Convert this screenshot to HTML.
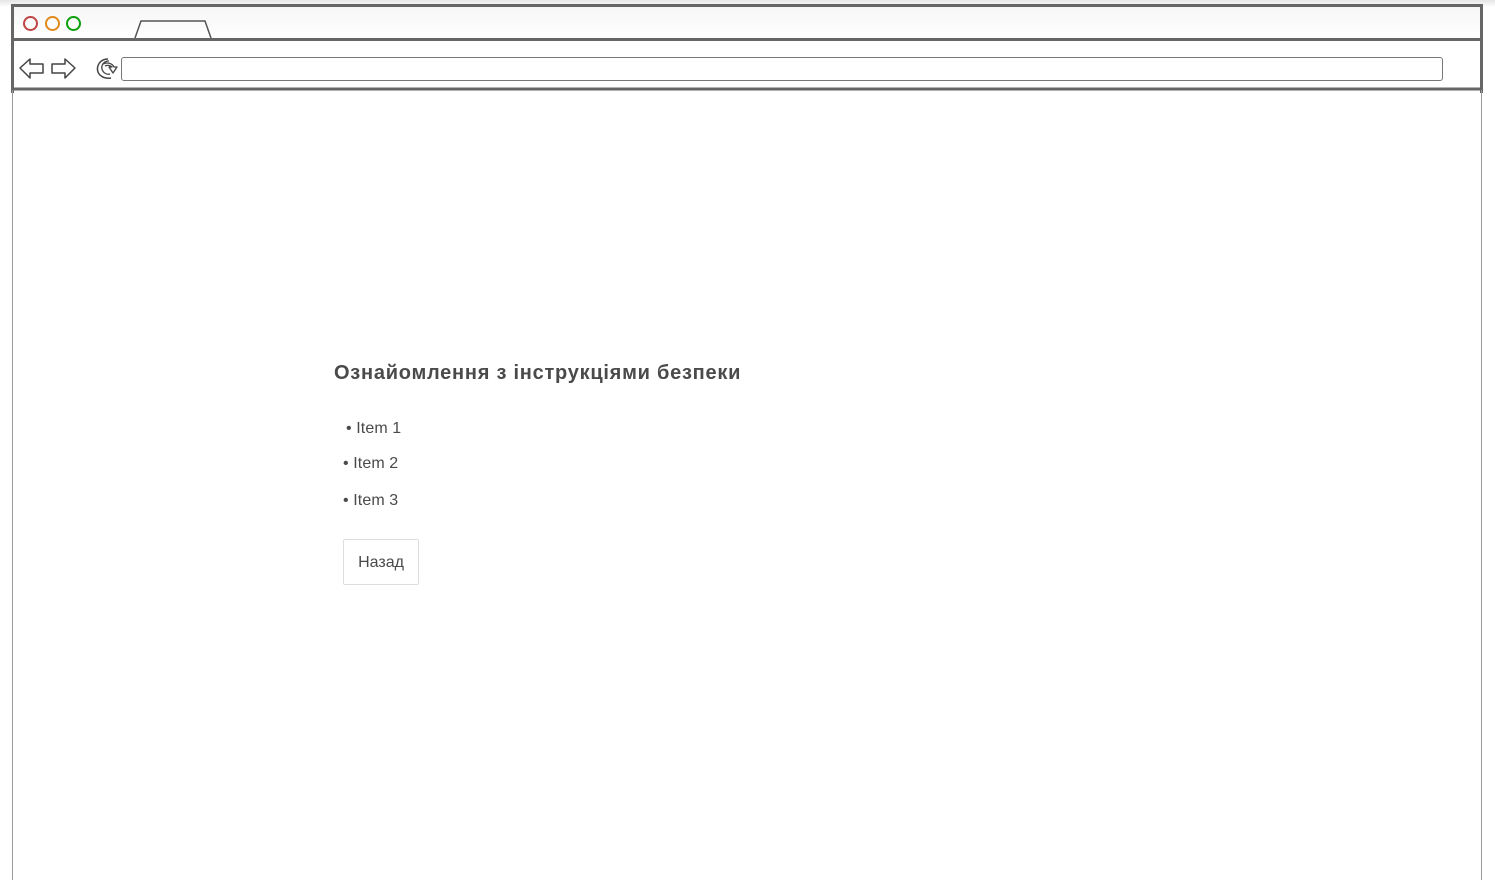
<!DOCTYPE html>
<html><head><meta charset="utf-8"><style>
body{margin:0;width:1495px;height:880px;overflow:hidden;background:#fff;font-family:"Liberation Sans",Arial,sans-serif;position:relative}
.topgrad{position:absolute;left:0;top:0;width:1495px;height:6px;background:linear-gradient(#e6e6e6,#fafafa)}
.frame{position:absolute;left:11px;top:4px;width:1466px;height:86px;border:3px solid #666;border-bottom:none;background:linear-gradient(#f6f6f6,#fff 30px)}
.sep{position:absolute;left:11px;top:38px;width:1472px;height:3px;background:#666}
.toolbar{position:absolute;left:14px;top:41px;width:1466px;height:46px;background:#fff}
.side{position:absolute;top:90px;width:1px;height:790px;background:#999}
.c{position:absolute;top:16px;width:11px;height:11px;border-radius:50%;border:2px solid}
.url{position:absolute;left:121px;top:57px;width:1320px;height:22px;border:1px solid #777;border-radius:3px;background:#fff}
h1{position:absolute;left:334px;top:362px;margin:0;font-size:20px;font-weight:bold;color:#4a4a4a;letter-spacing:0.75px}
.li{position:absolute;font-size:16px;color:#4a4a4a;letter-spacing:0.1px}
.btn{position:absolute;left:343px;top:539px;width:76px;height:46px;border:1px solid #ddd;border-radius:2px;box-sizing:border-box;font-size:16px;color:#4a4a4a;text-align:center;line-height:46px}
</style></head><body>
<div class="topgrad"></div>
<div class="frame"></div>
<div class="toolbar"></div>
<div class="sep"></div>
<div class="c" style="left:23px;border-color:#c04444"></div>
<div class="c" style="left:45px;border-color:#e08a1a"></div>
<div class="c" style="left:66px;border-color:#0aa00a"></div>
<svg style="position:absolute;left:0;top:0" width="1495" height="95">
<path d="M135 38 L141 21 L205 21 L211 38" fill="none" stroke="#555" stroke-width="1.5"/>
<path d="M20 68 L30 59 L30 64 L43 64 L43 73 L30 73 L30 78 Z" fill="#fff" stroke="#444" stroke-width="1.5" stroke-linejoin="round"/>
<path d="M75 68 L65 59 L65 64 L52 64 L52 73 L65 73 L65 78 Z" fill="#fff" stroke="#444" stroke-width="1.5" stroke-linejoin="round"/>
<path d="M108 59 C100 59 96 66 98 72 C100 77 106 79 111 78" fill="none" stroke="#444" stroke-width="1.5"/>
<path d="M109 61 C104 61 101 65 102 69 C103 73 107 75 110 74" fill="none" stroke="#444" stroke-width="1.3"/>
<path d="M103 64 C107 62 112 63 114 67 L117 67 L113 73 L109 67 L112 67 C110 65 107 65 105 66" fill="#fff" stroke="#444" stroke-width="1.3" stroke-linejoin="round"/>
<line x1="1481.5" y1="4" x2="1481.5" y2="90" stroke="#666" stroke-width="3"/>
<line x1="11" y1="89" x2="1483" y2="89" stroke="#666" stroke-width="3"/>
</svg>
<div class="url"></div>
<div class="side" style="left:12px"></div>
<div class="side" style="left:1481px"></div>
<h1>Ознайомлення з інструкціями безпеки</h1>
<div class="li" style="left:346px;top:420px">• Item 1</div>
<div class="li" style="left:343px;top:455px">• Item 2</div>
<div class="li" style="left:343px;top:492px">• Item 3</div>
<div class="btn">Назад</div>
</body></html>
